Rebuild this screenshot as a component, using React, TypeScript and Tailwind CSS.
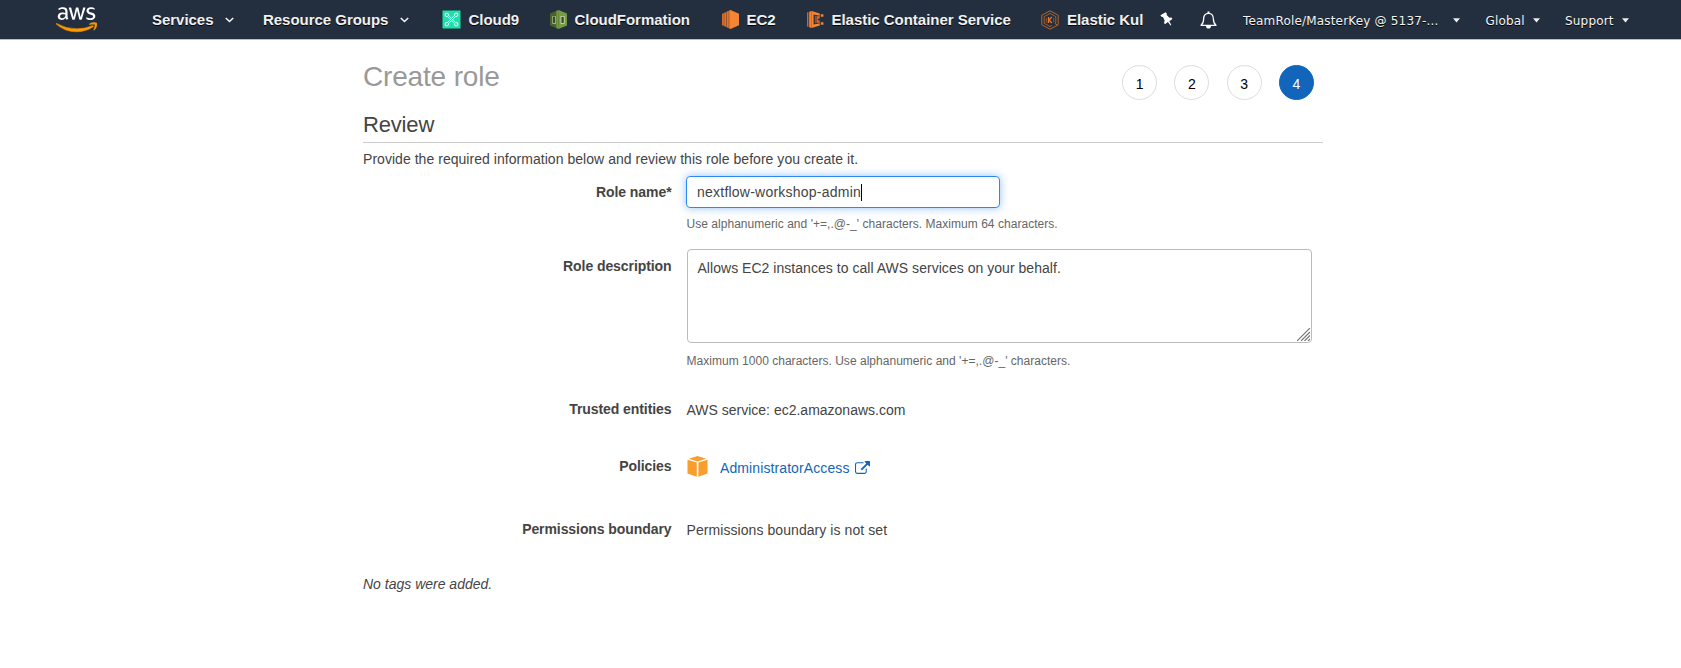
import type { ReactNode } from "react";
import { FaAws } from "react-icons/fa";

function Chevron() {
  return (
    <svg width="9" height="6" viewBox="0 0 9 6" fill="none" className="shrink-0">
      <path d="M0.800 1 4.500 4.500 8.200 1" stroke="#f5f5f5" strokeWidth="1.600" />
    </svg>
  );
}

function Caret() {
  return (
    <svg width="7" height="5" viewBox="0 0 7 5" className="shrink-0">
      <path d="M0 0.300h7L3.500 4.400z" fill="#eee" />
    </svg>
  );
}

function AwsLogo() {
  return (
    <span className="mr-[55px] grid h-[33px] w-[41px] shrink-0">
      <FaAws className="col-start-1 row-start-1 h-[33px] w-[41px] text-white [clip-path:inset(0_0_42%_0)]" />
      <FaAws className="col-start-1 row-start-1 h-[33px] w-[41px] stroke-[#f90] stroke-[8] text-[#f90] [clip-path:inset(58%_0_0_0)]" />
    </span>
  );
}

function Cloud9Icon() {
  return (
    <svg width="19" height="19" viewBox="0 0 19 19" fill="none" className="shrink-0">
      <rect x=".5" y=".5" width="18" height="18" fill="#1fe0ac" />
      <g stroke="#fff" strokeWidth=".9">
        <path d="M6.400 5.300l7.300 7.400M5.300 6.400l7.300 7.300M12.600 5.300l-7.300 7.400M13.700 6.400l-7.300 7.300" />
        <path d="M6.400 5.300A1.700 1.700 0 1 0 5.300 6.400M12.600 5.300A1.700 1.700 0 1 1 13.700 6.400M6.400 13.700A1.700 1.700 0 1 1 5.300 12.600M12.600 13.700A1.700 1.700 0 1 0 13.700 12.600" />
      </g>
    </svg>
  );
}

function CloudFormationIcon() {
  return (
    <svg width="17" height="19" viewBox="0 0 17 19" className="shrink-0">
      <path d="M8.500 0 0 3.600v11.800L8.500 19z" fill="#4b612c" />
      <path d="M8.500 0 17 3.600v11.800L8.500 19z" fill="#759c3e" />
      <path d="M8.500 0 6.400 1v17l2.100 1z" fill="#759c3e" />
      <path d="M2.200 5.900h3.600v8.300l-3.600-.7z" fill="#b7ca9d" />
      <path d="M2.800 6.600h2.300v6.600l-2.300-.5z" fill="#3c4929" />
      <path d="M10.600 5.900h4v7.600l-4 .7z" fill="#d5dec8" />
      <path d="M11.400 6.700h2.400v6.100l-2.400.4z" fill="#3c4929" />
    </svg>
  );
}

function Ec2Icon() {
  return (
    <svg width="17" height="19" viewBox="0 0 17 19" className="shrink-0">
      <path d="M8.500 0 0 3.800v11.400L8.500 19z" fill="#9d5025" />
      <path d="M.2 3.900 1.600 3.400v12.200L.2 15.100zM2.500 3 4 2.300v14.400l-1.500-.7zM5 1.800 6.600 1v17L5 17.200z" fill="#e0752e" />
      <path d="M7.400.5 8.500 0 17 3.800v11.400L8.500 19l-1.100-.5z" fill="#f58534" />
    </svg>
  );
}

function EcsIcon() {
  return (
    <svg width="17" height="17" viewBox="0 0 17 17" className="shrink-0">
      <path d="M0 1.400 1.400 1v15L0 15.600z" fill="#c9672d" />
      <path d="M2.200.8 4.600 0v17l-2.400-.8z" fill="#f58534" />
      <path d="M4.600 0 12.800 2.400V4.800L6.600 3.600v9.800l6.200-1.200v2.400L4.600 17z" fill="#f58534" />
      <path d="M7.800 4.600 9.800 5.200v6.600l-2 .6z" fill="#9d5025" />
      <path d="M9.800 5.200 12.800 5v2.500l-2 .4v1.200l2 .4V12l-3-.2z" fill="#c9672d" />
      <path d="M13.800 3.200h2.600v2.600h-2.600zM13.800 11.200h2.600v2.600h-2.600z" fill="#f58534" />
    </svg>
  );
}

function EksIcon() {
  return (
    <svg width="18" height="20" viewBox="0 0 18 20" fill="none" stroke="#b5652c" className="shrink-0">
      <path d="M9 .8 17.200 5.200v9.600L9 19.200.8 14.800V5.200z" strokeWidth="1" />
      <path d="M16.600 15.200l-2.800-1.800 1-.9V6.700L9 3.400 3.200 6.700v6.600L9 16.600l2-1.200" strokeWidth=".9" />
      <path d="M7.500 7v6M10.900 7 8 10l2.900 3" stroke="#e8722a" strokeWidth="1.300" />
      <path d="M5.300 8v4.200l1.200.8M12.700 8v4.200" strokeWidth=".7" />
    </svg>
  );
}

function PinIcon() {
  return (
    <svg width="13" height="14" viewBox="0 0 13 14" className="shrink-0">
      <path
        d="M.4 3.200 5.600.2 6.800 1.600 6.700 3l2.700 2.700 2-.1 1 1.500-3.100 2.100 2 3.900-.7.400-2.700-3.500-3 2.300-.9-1.600.7-2L3 5.100 1.400 4.800z"
        fill="#fff"
      />
    </svg>
  );
}

function BellIcon() {
  return (
    <svg width="17" height="18" viewBox="0 0 17 18" fill="none" className="shrink-0">
      <path
        d="M1 14.300C3 12.800 3.600 11 3.600 8.300 3.600 4.600 5.200 2.300 8.500 2.300s4.900 2.300 4.900 6c0 2.700.6 4.500 2.600 6z"
        stroke="#fff"
        strokeWidth="1.300"
        strokeLinejoin="round"
      />
      <path d="M7.500 2.200V.5h2v1.700zM6 15h5c0 1.700-1 2.600-2.500 2.600S6 16.700 6 15z" fill="#fff" />
    </svg>
  );
}

function PolicyIcon() {
  return (
    <svg width="21" height="21" viewBox="0 0 20 21" fill="#f99d2d" className="shrink-0">
      <path d="M10 0 18.600 2.700 10 5.400 1.400 2.700z" />
      <path d="M0 3.700 9.300 6.600V20.700L0 17.500z" />
      <path d="M20 3.700 10.900 6.600V20.700L20 17.500z" />
    </svg>
  );
}

function ExternalIcon() {
  return (
    <svg width="15" height="13" viewBox="0 0 1792 1536" fill="#1166bb" className="shrink-0">
      <path d="M1408 928v320q0 119-84.500 203.500t-203.500 84.500h-832q-119 0-203.500-84.500t-84.500-203.500v-832q0-119 84.500-203.500t203.500-84.500h704q14 0 23 9t9 23v64q0 14-9 23t-23 9h-704q-66 0-113 47t-47 113v832q0 66 47 113t113 47h832q66 0 113-47t47-113v-320q0-14 9-23t23-9h64q14 0 23 9t9 23zm384-864v512q0 26-19 45t-45 19-45-19l-176-176-652 652q-10 10-23 10t-23-10l-114-114q-10-10-10-23t10-23l652-652-176-176q-19-19-19-45t19-45 45-19h512q26 0 45 19t19 45z" />
    </svg>
  );
}

function ResizeGrip() {
  return (
    <svg width="13" height="13" viewBox="0 0 13 13" stroke="#707070" strokeWidth="1.100" className="shrink-0">
      <path d="M0 13 13 0M4 13l9-9M7.500 13 13 7.500M11 13l2-2" />
    </svg>
  );
}

function Shortcut({ icon, className, children }: { icon: ReactNode; className: string; children: ReactNode }) {
  return (
    <div className={`flex items-center ${className}`}>
      {icon}
      <span className="pt-px">{children}</span>
    </div>
  );
}

function Row({ label, className, children }: { label: ReactNode; className: string; children: ReactNode }) {
  return (
    <div className={`flex ${className}`}>
      <div className="mr-[15px] w-[308.500px] shrink-0 text-right font-bold tracking-[-0.080px] whitespace-nowrap">{label}</div>
      <div className="whitespace-nowrap">{children}</div>
    </div>
  );
}

const step = "flex size-[35px] items-center justify-center rounded-full border pt-0.5";

export default function App() {
  return (
    <div className="h-[668px] w-[1681px] overflow-hidden bg-white font-['Liberation_Sans',Arial,sans-serif] text-[14px] leading-5 text-[#444]">
      <header className="flex h-10 items-center border-b border-[#b9bcc2] bg-[#232f3e] pl-[56px] whitespace-nowrap text-white">
        <AwsLogo />
        <nav className="flex items-center text-[15px] font-bold tracking-[-0.03px] text-[#f0f0f0] [text-shadow:0_1px_0_#000]">
          <div className="flex w-[111px] items-center justify-between pr-[29px]">Services<Chevron /></div>
          <div className="flex w-[179px] items-center justify-between pr-[33px]">Resource Groups<Chevron /></div>
          <Shortcut className="w-[108px] gap-[7.500px]" icon={<Cloud9Icon />}>Cloud9</Shortcut>
          <Shortcut className="w-[172px] gap-[7.500px]" icon={<CloudFormationIcon />}>CloudFormation</Shortcut>
          <Shortcut className="w-[85px] gap-[7.500px]" icon={<Ec2Icon />}>EC2</Shortcut>
          <Shortcut className="w-[233.500px] gap-[7.500px]" icon={<EcsIcon />}>Elastic Container Service</Shortcut>
          <Shortcut className="w-[119.500px] gap-[8.500px]" icon={<EksIcon />}>Elastic Kul</Shortcut>
        </nav>
        <div className="flex w-[40px] pb-px"><PinIcon /></div>
        <div className="flex w-[43px]"><BellIcon /></div>
        <div className="flex items-center pt-[2px] font-['DejaVu_Sans',Verdana,sans-serif] text-[12px] tracking-[0.180px] text-[#f5f5f5] [text-shadow:0_1px_0_#000]">
          <div className="flex w-[242.500px] items-center justify-between pr-[26px]">TeamRole/MasterKey @ 5137-...<Caret /></div>
          <div className="flex w-[79.500px] items-center justify-between pr-[25px]">Global<Caret /></div>
          <div className="flex w-[64px] items-center justify-between">Support<Caret /></div>
        </div>
      </header>

      <main className="ml-[363px] w-[960px]">
        <div className="flex h-[69px] justify-between">
          <h1 className="pt-[21px] text-[28px] leading-8 tracking-[-0.170px] text-[#999]">Create role</h1>
          <ol className="mr-[9px] flex gap-[17.300px] pt-[25px] text-black">
            <li className={`${step} border-[#ddd]`}>1</li>
            <li className={`${step} border-[#ddd]`}>2</li>
            <li className={`${step} border-[#ddd]`}>3</li>
            <li className={`${step} border-[#1166bb] bg-[#1166bb] text-white`}>4</li>
          </ol>
        </div>
        <h2 className="h-[34px] border-b border-[#ccc] pt-[2px] text-[22px] leading-7 tracking-[-0.170px]">Review</h2>
        <p className="h-[33px] pt-[6px] tracking-[0.040px]">
          Provide the required information below and review this role before you create it.
        </p>
        <Row className="h-[73px]" label={<div className="pt-[6px]">Role name*</div>}>
          <div className="ml-[-0.500px] flex h-8 w-[314px] items-center rounded-[4px] border border-[#2a8af0] pl-[10px] tracking-[0.230px] shadow-[0_0_8px_rgba(17,119,238,0.450)]">
            nextflow-workshop-admin
            <span className="h-[17px] w-px bg-black" />
          </div>
          <p className="pt-[6px] text-[12px] tracking-[0.035px] text-[#666]">
            Use alphanumeric and '+=,.@-_' characters. Maximum 64 characters.
          </p>
        </Row>
        <Row className="h-[150px]" label={<div className="pt-[7px]">Role description</div>}>
          <div className="flex h-[94px] w-[625px] items-end justify-between rounded-[4px] border border-[#bbb] pr-px pb-px pl-[10px]">
            <span className="self-start pt-[8px] tracking-[0.035px]">Allows EC2 instances to call AWS services on your behalf.</span>
            <ResizeGrip />
          </div>
          <p className="pt-[8px] text-[12px] tracking-[0.025px] text-[#666]">
            Maximum 1000 characters. Use alphanumeric and '+=,.@-_' characters.
          </p>
        </Row>
        <Row className="h-[57px]" label="Trusted entities">
          <div className="pt-px">AWS service: ec2.amazonaws.com</div>
        </Row>
        <Row className="h-[63px]" label="Policies">
          <div className="flex text-[#1166bb]">
            <PolicyIcon />
            <span className="ml-[12.500px] pt-[2px] tracking-[0.100px]">AdministratorAccess</span>
            <span className="ml-[5.500px] pt-[5px]"><ExternalIcon /></span>
          </div>
        </Row>
        <Row className="h-[55px]" label="Permissions boundary">
          <div className="pt-px tracking-[0.070px]">Permissions boundary is not set</div>
        </Row>
        <p className="italic">No tags were added.</p>
      </main>
    </div>
  );
}
